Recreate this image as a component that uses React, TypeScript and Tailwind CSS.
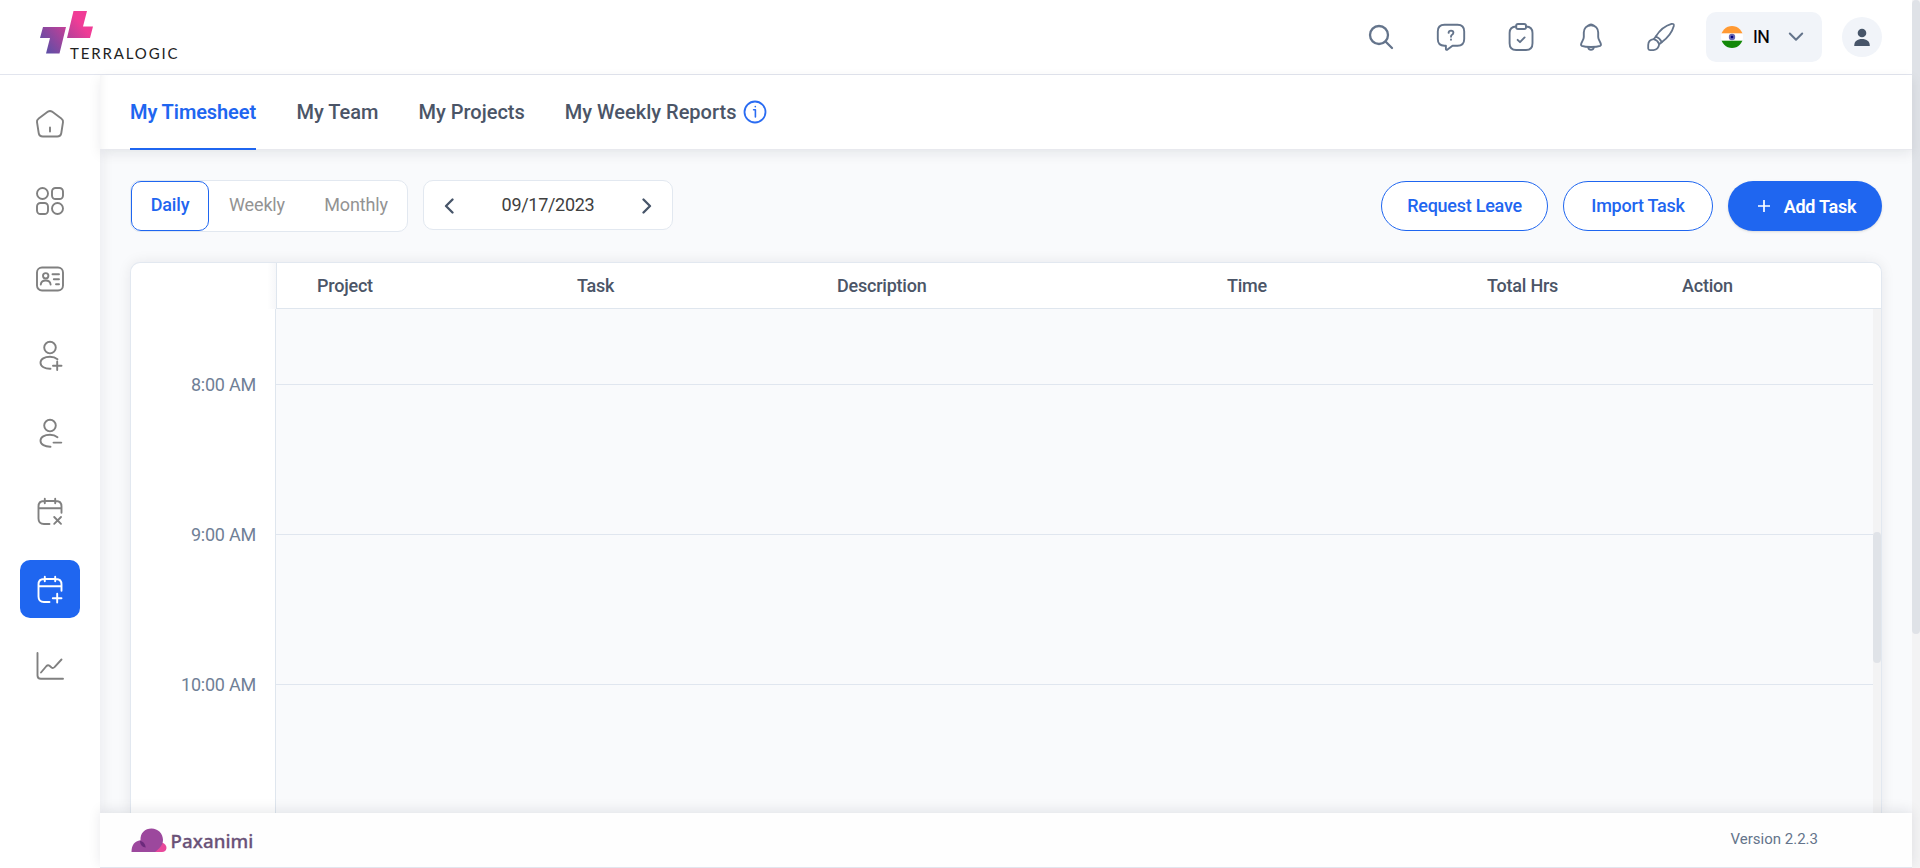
import React from "react";

const times = ["8:00 AM", "9:00 AM", "10:00 AM"];

const columns = [
  { label: "Project", cls: "w-[260px]" },
  { label: "Task", cls: "w-[260px]" },
  { label: "Description", cls: "w-[390px]" },
  { label: "Time", cls: "w-[260px]" },
  { label: "Total Hrs", cls: "w-[195px]" },
  { label: "Action", cls: "w-[160px]" },
];

function Icon({ size = 32, sw = 1.5, className = "", children }: { size?: number; sw?: number; className?: string; children: React.ReactNode }) {
  return (
    <svg width={size} height={size} viewBox={`0 0 ${size} ${size}`} fill="none" stroke="currentColor" strokeWidth={sw} strokeLinecap="round" strokeLinejoin="round" className={`block shrink-0 ${className}`}>
      {children}
    </svg>
  );
}

function Logo() {
  return (
    <div className="flex pl-10 pt-[11px]">
      <svg width="54" height="43" viewBox="0 0 54 43" className="block shrink-0">
        <defs>
          <linearGradient id="tl" gradientUnits="userSpaceOnUse" x1="6" y1="40" x2="40" y2="12">
            <stop offset="0" stopColor="#5f4ea6" />
            <stop offset="0.55" stopColor="#b0429a" />
            <stop offset="1" stopColor="#f03c96" />
          </linearGradient>
        </defs>
        <path fill="url(#tl)" d="M3 16H26L19.500 42.500H6L10 27H0ZM33.500 0H47L43 15.500H53L50 27H27Z" />
      </svg>
      <span className="-ml-6 mt-[33px] font-['Lato'] text-[15px] leading-[18px] tracking-[1.850px] text-[#222]">TERRALOGIC</span>
    </div>
  );
}

function TopBar() {
  return (
    <header className="flex h-[75px] shrink-0 justify-between border-b border-[#e2e5ee] bg-white">
      <Logo />
      <div className="flex items-center pr-[30px] text-[#64748b]">
        <div className="flex gap-[38px] pr-[29px]">
          <Icon sw={2.3}>
            <circle cx="14" cy="14" r="9" />
            <path d="M20.500 20.500L27 27" />
          </Icon>
          <Icon sw={1.9}>
            <path d="M9.500 3.700H22.500Q29.200 3.700 29.200 10.400V18Q29.200 24.700 22.500 24.700H17.500L12.500 28.600Q10.700 29.600 10.900 27.500V24.700H9.500Q2.800 24.700 2.800 18V10.400Q2.800 3.700 9.500 3.700Z" />
            <path d="M13.600 11.800Q13.800 9.600 16 9.600Q18.400 9.700 18.400 11.800Q18.300 13.200 16.800 14Q16 14.500 16 15.800M16 18.500V18.700" />
          </Icon>
          <Icon sw={1.9}>
            <path d="M11.200 5.500Q4.600 5.600 4.600 12V22.300Q4.600 29 11.200 29H21Q27.500 29 27.500 22.300V12Q27.500 5.600 21 5.500" />
            <rect x="11.200" y="3" width="9.800" height="5" rx="1.800" />
            <path d="M12.600 18.800L15 21.200L19.600 16.400" />
          </Icon>
          <Icon sw={1.9}>
            <path d="M16 4.200C11.500 4.200 8.800 7.500 8.800 11.500V16Q8.800 18 7.200 20.500Q5.200 23.800 6.700 24.800Q10 26 16 26T25.300 24.800Q26.800 23.800 24.800 20.500Q23.200 18 23.200 16V11.500C23.200 7.500 20.500 4.200 16 4.200Z" />
            <path d="M13.200 26.500Q13.700 28.800 16 28.800T18.800 26.500M14 4.300Q16 2.500 18 4.300" />
          </Icon>
          <Icon sw={1.800}>
            <path d="M10.800 15.500C14.500 9.500 21 4.500 26.500 2.900Q29.300 2.400 28.800 5C27.300 10.500 22.500 17 16.700 21.200" />
            <path d="M10.800 15.500Q14.800 17 16.700 21.200L14.200 23.200Q12.600 19.200 8.700 18.200Z" />
            <path d="M8.700 18.200C5.400 18.700 3.300 21 3.200 24V27.500Q3.300 29.100 5 29.100H8.500C11.500 28.900 13.700 26.600 14.200 23.200" />
          </Icon>
        </div>
        <div className="flex h-[50px] w-[116px] items-center rounded-[10px] bg-[#f1f4f9] pl-[15px]">
          <svg width="22" height="22" viewBox="0 0 22 22" className="block">
            <clipPath id="flag"><circle cx="11" cy="11" r="11" /></clipPath>
            <g clipPath="url(#flag)">
              <rect width="22" height="22" fill="#fff" />
              <rect width="22" height="7.300" fill="#f93" />
              <rect y="14.700" width="22" height="7.300" fill="#138808" />
            </g>
            <circle cx="11" cy="11" r="3.200" fill="#6666b3" />
            <circle cx="11" cy="11" r="1.300" fill="#000080" />
          </svg>
          <span className="ml-2.5 mr-px w-[34px] text-[17.600px] tracking-[-0.5px] text-black [-webkit-text-stroke:0.2px_black]">IN</span>
          <Icon size={16} sw={2}><path d="M1.800 4.500L8 10.800L14.200 4.500" /></Icon>
        </div>
        <div className="ml-5 flex size-10 items-center justify-center rounded-full bg-[#f1f4f9] text-[#475569]">
          <svg width="18" height="18" viewBox="0 0 18 18" fill="currentColor" className="block">
            <circle cx="9" cy="5" r="4.300" />
            <path d="M1.200 18C1.200 13 4.500 11 9 11S16.800 13 16.800 18Z" />
          </svg>
        </div>
      </div>
    </header>
  );
}

const calendar = (
  <path d="M4.500 13.200H27.500M4.500 11.500Q4.500 6 10 6H22Q27.500 6 27.500 11.500V17.800M4.500 11.500V23.500Q4.500 29 10 29H15.500M10.800 3.800V8.200M21.200 3.800V8.200" />
);

const navIcons = [
  <path d="M14 3.600Q16 2.400 18 3.600L27.300 10.500Q29.300 12 29 14.200L27.300 25Q26.700 28.500 23.200 28.500H8.800Q5.300 28.500 4.700 25L3 14.200Q2.700 12 4.700 10.500ZM16 19.500V23.500" />,
  <>
    <circle cx="8.500" cy="8.500" r="5.500" />
    <rect x="18" y="3" width="11" height="11" rx="3.500" />
    <rect x="3" y="18" width="11" height="11" rx="3.500" />
    <circle cx="23.500" cy="23.500" r="5.500" />
  </>,
  <>
    <rect x="3" y="4.500" width="26" height="23" rx="5" />
    <circle cx="11.700" cy="12.800" r="2.700" />
    <path d="M6.800 21.500Q7.200 17.500 11.700 17.500T16.600 21.500M18.500 11.200H25M19.800 16.200H25M22 21.200H25" />
  </>,
  <>
    <circle cx="16" cy="7.600" r="5.800" />
    <path d="M23.500 19.200Q20.500 16.700 16 16.700C10.500 16.700 6.500 19 6.500 22.800C6.500 26.500 11 29 16.500 28.800M19 25.800H27.500M23.200 21.500V30" />
  </>,
  <>
    <circle cx="16" cy="7.600" r="5.800" />
    <path d="M23.500 19.200Q20.500 16.700 16 16.700C10.500 16.700 6.500 19 6.500 22.800C6.500 26.500 11 28.800 16.500 28.700M19.500 24.600H27.300" />
  </>,
  <>{calendar}<path d="M20.200 22L27 28.800M27 22L20.200 28.800" /></>,
  <>{calendar}<path d="M18.800 25.200H27.500M23.200 20.800V29.500" /></>,
  <path d="M3.500 3V25.500Q3.500 28.800 6.800 28.800H29M7 22.500L12.500 16Q14 14.500 15.500 15.800L17.500 17.500Q19 18.500 20.500 17.100L27.500 9.500" />,
];

function Sidebar() {
  return (
    <aside className="flex w-[100px] shrink-0 flex-col items-center gap-[19.570px] bg-white pt-5">
      {navIcons.map((icon, i) => (
        <div key={i} className={`flex h-[58px] w-[60px] shrink-0 items-center justify-center rounded-[10px] pb-px ${i === 6 ? "bg-[#1f66f0] text-white" : "text-[#808080]"}`}>
          <Icon sw={1.9}>{icon}</Icon>
        </div>
      ))}
    </aside>
  );
}

function Tabs() {
  return (
    <nav className="z-10 flex h-[75px] shrink-0 items-stretch gap-10 border-b border-[#e8e9ee] bg-white pl-[30px] text-[20px] font-medium text-[#4b5567] shadow-[inset_9px_0_10px_-8px_rgba(15,23,42,0.06),0_4px_12px_rgba(15,23,42,0.08)]">
      <div className="-mb-px mr-[0.500px] flex w-[126px] items-center border-b-2 border-[#1f66f0] whitespace-nowrap font-semibold tracking-[-0.1px] text-[#1f66f0]">My Timesheet</div>
      <div className="flex items-center">My Team</div>
      <div className="flex items-center">My Projects</div>
      <div className="flex items-center gap-[7px]">
        My Weekly Reports
        <Icon size={24} sw={1.8} className="text-[#2a6cf2]">
          <circle cx="12" cy="12" r="10.500" />
          <path strokeWidth="1.600" d="M10.600 9.700H12.400V17M12.300 6.500V6.700" />
        </Icon>
      </div>
    </nav>
  );
}

function Toolbar() {
  return (
    <div className="flex justify-between">
      <div className="flex items-start gap-[15px]">
        <div className="flex h-[52px] w-[278px] rounded-[10px] border border-[#e2e8f0] bg-white text-[18px] tracking-[-0.15px] text-[#939393]">
          <div className="flex h-[50px] w-[78px] items-center justify-center rounded-[10px] border border-[#1f66f0] pb-[3px] font-medium text-[#1f66f0]">Daily</div>
          <div className="flex w-[96px] items-center justify-center pb-[3px]">Weekly</div>
          <div className="flex w-[102px] items-center justify-center pb-[3px]">Monthly</div>
        </div>
        <div className="flex h-[50px] w-[250px] items-center justify-between rounded-[10px] border border-[#e2e8f0] bg-white px-[17px] text-[18px] tracking-[-0.3px] text-[#404040]">
          <Icon size={16} sw={2.300} className="mt-0.5 text-[#475569]"><path d="M11.500 1.500L5 8L11.500 14.500" /></Icon>
          <span className="mb-px">09/17/2023</span>
          <Icon size={16} sw={2.300} className="mt-0.5 text-[#475569]"><path d="M4.500 1.500L11 8L4.500 14.500" /></Icon>
        </div>
      </div>
      <div className="mt-px flex gap-[15px] text-[18px] font-medium tracking-[-0.250px] text-[#1f66f0]">
        <button className="h-[50px] w-[167px] rounded-full border border-[#1f66f0] bg-white pb-px">Request Leave</button>
        <button className="h-[50px] w-[150px] rounded-full border border-[#1f66f0] bg-white pb-px">Import Task</button>
        <button className="flex h-[50px] w-[154px] items-center justify-center gap-[14px] rounded-full bg-[#1f66f0] pl-1 font-semibold text-white shadow-sm">
          <Icon size={12} sw={1.700}><path d="M6 0.500V11.500M0.500 6H11.500" /></Icon>
          Add Task
        </button>
      </div>
    </div>
  );
}

function Schedule() {
  return (
    <section className="mt-[30px] flex min-h-0 grow flex-col rounded-t-[10px] border border-b-0 border-[#e2e8f0] bg-white shadow-[0_0_14px_rgba(15,23,42,0.08)]">
      <div className="flex h-[46px] shrink-0">
        <div className="w-[145px] shrink-0 bg-linear-to-r from-transparent from-94% to-[#f6f7f9]" />
        <div className="flex grow items-center border-b border-l border-[#dfe6ee] pl-10 text-[18px] font-medium tracking-[-0.220px] text-[#4b5567]">
          {columns.map((c) => (
            <div key={c.label} className={`shrink-0 ${c.cls}`}>{c.label}</div>
          ))}
        </div>
      </div>
      <div className="flex min-h-0 grow overflow-hidden">
        <div className="w-[144px] shrink-0 pt-[60px] text-right text-[18px] tracking-[-0.220px] text-[#708096]">
          {times.map((t) => (
            <div key={t} className="h-[150px] pr-[19px] leading-[31px]">{t}</div>
          ))}
        </div>
        <div className="grow border-l border-[#dfe6ee] bg-[#f9fafc] pt-[75px]">
          {times.map((t) => (
            <div key={t} className="h-[150px] border-t border-[#e0e6ef]" />
          ))}
        </div>
        <div className="w-2 shrink-0 bg-[#f3f3f4] pt-[223px]">
          <div className="h-[131px] rounded bg-[#e0e3e8]" />
        </div>
      </div>
    </section>
  );
}

function Footer() {
  return (
    <footer className="z-10 flex h-[55px] shrink-0 justify-between border-b border-[#e2e5ee] bg-[#fefefe] pl-[31px] pr-[94px] shadow-[0_-3px_12px_rgba(15,23,42,0.09)]">
      <div className="flex items-start pt-[15px]">
        <svg width="36" height="24" viewBox="0 0 36 24" className="block">
          <path fill="#e8489b" d="M22 24V17Q26 13 31 14.500Q35.500 16 35.500 20Q35 24 31 24Z" />
          <path fill="#9c489d" d="M24 24H0.500C0.500 17 3.500 13 9.500 12.200C9 5 14 0.500 20.500 0.500C27 0.500 32 5.500 32 12C32 17 28.500 20.500 24 24Z" />
          <path fill="#6c2a7c" d="M8.800 12.800Q13.800 13.500 14.800 19.600Q9.500 19 8.800 12.800Z" />
        </svg>
        <span className="-mt-px ml-[3.500px] font-['Noto_Sans'] text-[18.700px] leading-7 font-medium tracking-[0.050px] text-[#6a5278] [-webkit-text-stroke:0.3px_#6a5278]">Paxanimi</span>
      </div>
      <span className="mt-4 text-[15px] leading-5 text-[#64748b]">Version 2.2.3</span>
    </footer>
  );
}

export default function App() {
  return (
    <div className="flex h-[868px] w-full overflow-hidden bg-white font-['Roboto',sans-serif]">
      <div className="flex min-w-0 grow flex-col">
        <TopBar />
        <div className="flex min-h-0 grow">
          <Sidebar />
          <div className="flex min-w-0 grow flex-col bg-[#f9fafc]">
            <Tabs />
            <main className="flex min-h-0 grow flex-col pl-[30px] pr-[30px] pt-[30px] shadow-[inset_10px_0_12px_-6px_rgba(15,23,42,0.05)]">
              <Toolbar />
              <Schedule />
            </main>
            <Footer />
          </div>
        </div>
      </div>
      <div className="w-2 shrink-0 bg-[#f3f3f4]">
        <div className="h-[634px] rounded bg-[#dfe2e7]" />
      </div>
    </div>
  );
}
